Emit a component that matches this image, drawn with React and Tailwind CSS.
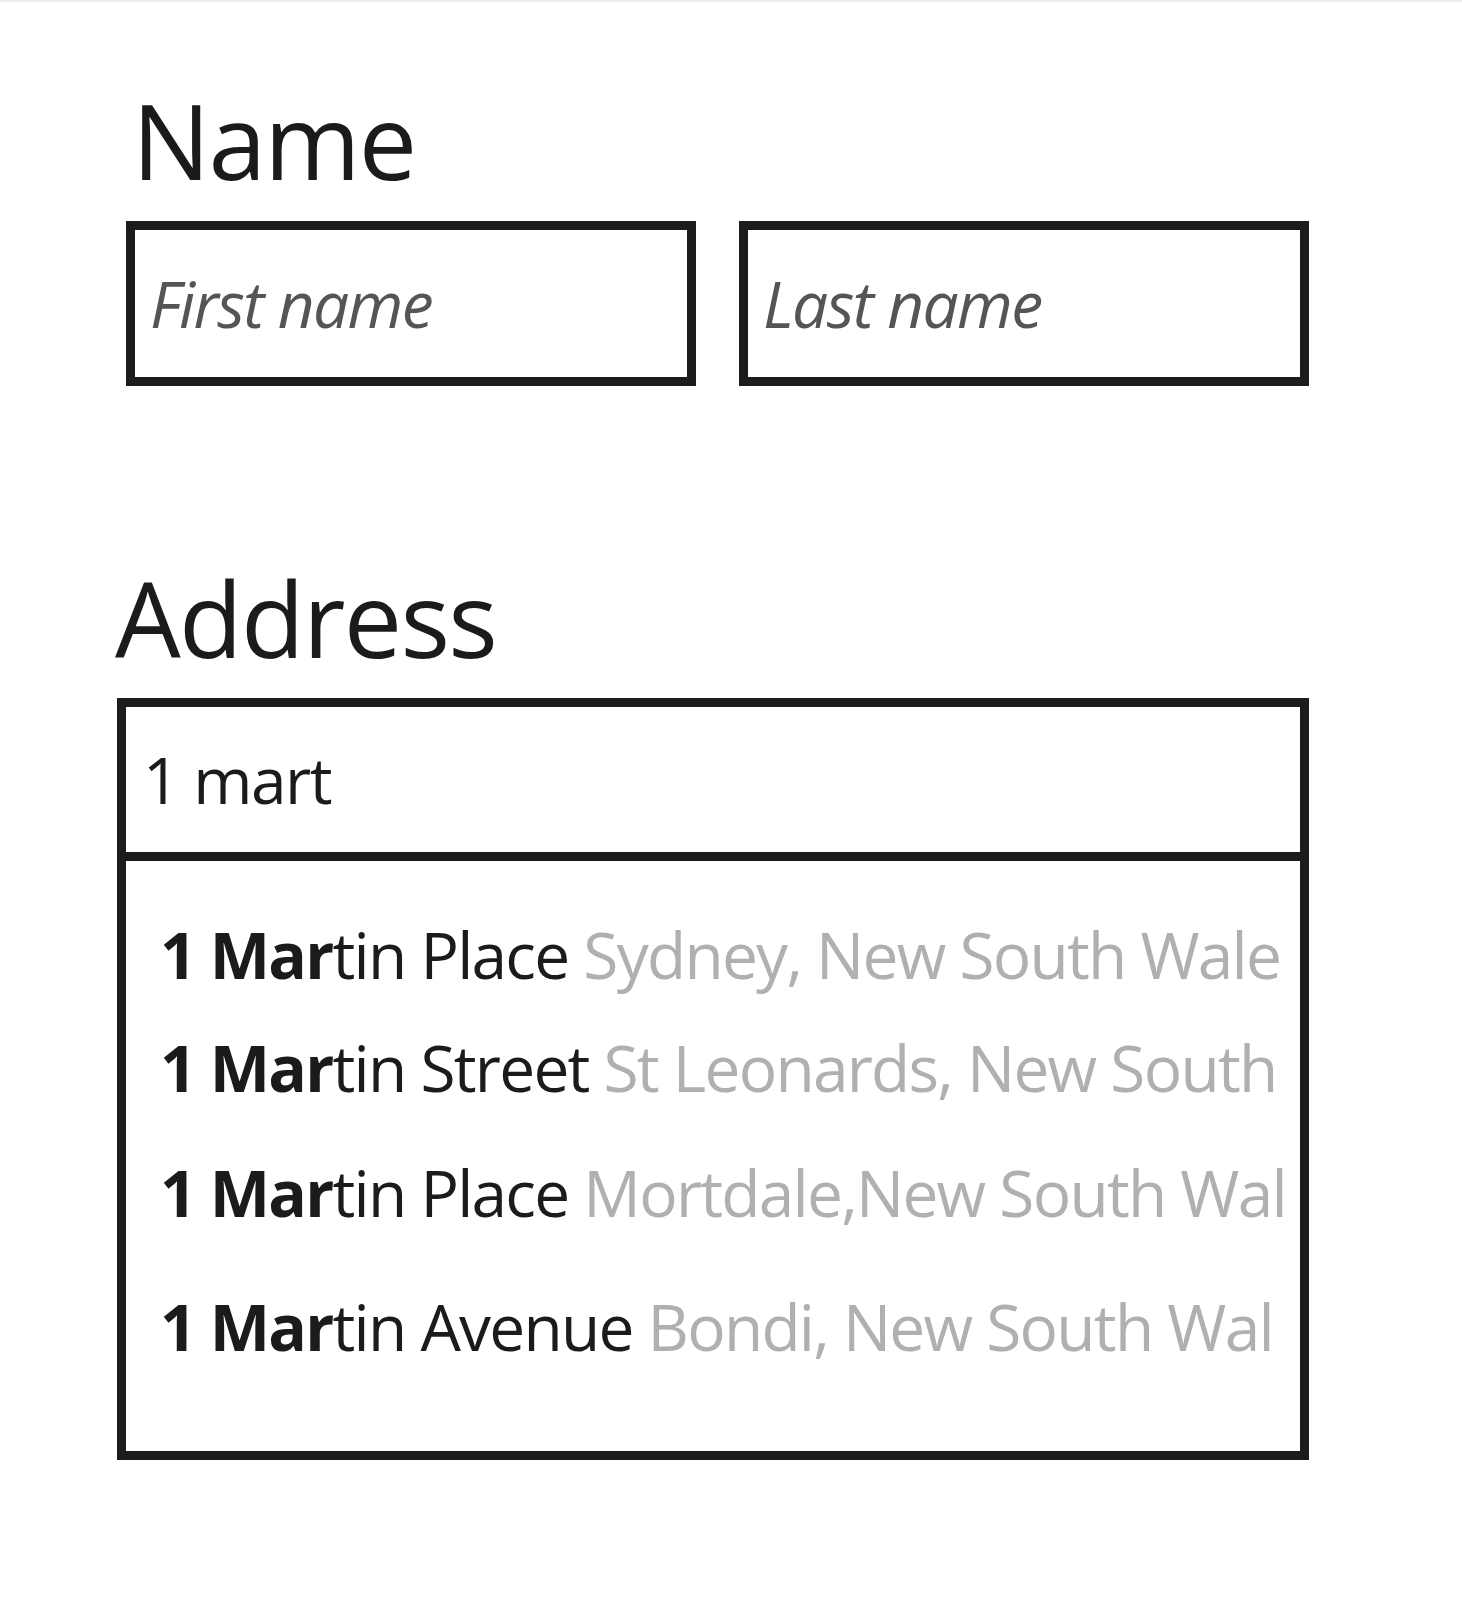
import React, { useState } from 'react';

const suggestions = [
  { street: 'tin Place', place: 'Sydney, New South Wale', gap: '' },
  { street: 'tin Street', place: 'St Leonards, New South', gap: 'mt-[49px]' },
  { street: 'tin Place', place: 'Mortdale,New South Wal', gap: 'mt-[61px]' },
  { street: 'tin Avenue', place: 'Bondi, New South Wal', gap: 'mt-[70px]' },
];

export default function App() {
  const [query, setQuery] = useState('1 mart');

  return (
    <div className="min-h-[1600px] bg-white border-t-2 border-[#ececec] text-[#1b1b1b] font-['Open_Sans','Noto_Sans',sans-serif]">
      {/* Name */}
      <section className="pt-[86px]">
        <h1 className="pl-[132px] text-[104px] leading-[104px] font-normal tracking-[-1.9px]">Name</h1>
        <div className="mt-[29px] ml-[126px] flex gap-[43px]">
          <input
            type="text"
            placeholder="First name"
            className="w-[570px] h-[165px] border-[9px] border-[#1c1c1c] px-[15px] text-[64px] leading-[64px] tracking-[-1.6px] outline-none placeholder:italic placeholder:text-[#555555]"
          />
          <input
            type="text"
            placeholder="Last name"
            className="w-[570px] h-[165px] border-[9px] border-[#1c1c1c] px-[15px] text-[64px] leading-[64px] tracking-[-1.6px] outline-none placeholder:italic placeholder:text-[#555555]"
          />
        </div>
      </section>

      {/* Address */}
      <section className="mt-[180px]">
        <h2 className="pl-[115px] text-[104px] leading-[104px] font-normal tracking-[-1.7px]">Address</h2>
        <div className="mt-[28px] ml-[117px] w-[1192px] border-[9px] border-[#1c1c1c]">
          <input
            type="text"
            value={query}
            onChange={(e) => setQuery(e.target.value)}
            className="block w-full h-[154px] px-[17px] text-[64px] leading-[64px] tracking-[-1.5px] outline-none border-b-[9px] border-[#1c1c1c]"
          />
          <ul className="pl-[34px] pt-[62px] pb-[92px] whitespace-nowrap tracking-[-1.75px]">
            {suggestions.map((s, i) => (
              <li key={i} className={`${s.gap} text-[64px] leading-[64px]`}>
                <span className="font-bold">1 Mar</span>
                <span>{s.street}</span>{' '}
                <span className="text-[#b0b0b0]">{s.place}</span>
              </li>
            ))}
          </ul>
        </div>
      </section>
    </div>
  );
}
